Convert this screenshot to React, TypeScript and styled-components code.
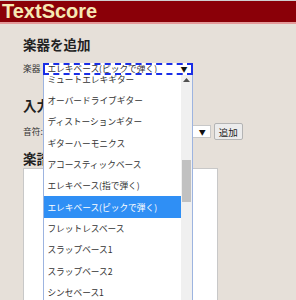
import styled, { createGlobalStyle } from 'styled-components'

const GlobalStyle = createGlobalStyle`
  html, body {
    margin: 0;
    background: #e6e0d9;
    font-family: "Noto Sans CJK JP", "Liberation Sans", sans-serif;
    color: #222;
  }
`

const Header = styled.header`
  height: 21px;
  background: #8a0008;
  border-top: 1px solid #cfcfcf;
  border-bottom: 2px solid #e49a9a;
`

const Title = styled.h1`
  margin: 0;
  padding-left: 2px;
  font-family: "Liberation Sans", Arial, sans-serif;
  font-size: 20px;
  font-weight: bold;
  line-height: 21px;
  color: #f6e8b4;
`

const Main = styled.main`
  padding: 0 23px;
`

const Heading = styled.h2<{ $top: number }>`
  margin: ${p => p.$top}px 0 0;
  font-size: 13.5px;
  line-height: 16px;
  font-weight: bold;
`

const Row = styled.div<{ $top: number }>`
  margin-top: ${p => p.$top}px;
  display: flex;
  align-items: center;
  gap: 3px;
  font-size: 8.7px;
`

const Label = styled.span`
  font-size: 8.7px;
  color: #333;
`

const SelectWrap = styled.div`
  position: relative;
`

const SelectBox = styled.div<{ $focused?: boolean; $width: number }>`
  box-sizing: border-box;
  width: ${p => p.$width}px;
  height: ${p => (p.$focused ? 12 : 13)}px;
  display: flex;
  align-items: center;
  justify-content: space-between;
  padding: 0 4px 0 2px;
  background: #fff;
  border: ${p => (p.$focused ? '2px dashed #1a2ee6' : '1px solid #c8c8c8')};
  font-size: 8.7px;
  color: #333;
  white-space: nowrap;
  overflow: hidden;
`

const Caret = styled.span`
  font-size: 7px;
  color: #111;
`

const ListBox = styled.div`
  position: absolute;
  top: 100%;
  left: 0;
  z-index: 10;
  box-sizing: border-box;
  width: 150px;
  height: 240px;
  display: flex;
  background: #fff;
  border: 1px solid #9db4e0;
  border-top: none;
`

const Options = styled.ul`
  flex: 1;
  margin: 0;
  padding: 0;
  list-style: none;
  overflow: hidden;
`

const Option = styled.li<{ $selected?: boolean; $first?: boolean }>`
  height: 21.33px;
  margin-top: ${p => (p.$first ? -6 : 0)}px;
  display: flex;
  align-items: center;
  padding-left: 3px;
  font-size: 8.7px;
  white-space: nowrap;
  color: ${p => (p.$selected ? '#fff' : '#333')};
  background: ${p => (p.$selected ? '#2f8ff5' : 'transparent')};
`

const ScrollTrack = styled.div`
  width: 11px;
  display: flex;
  flex-direction: column;
  align-items: center;
  background: #f0f0f0;
`

const ScrollArrow = styled.div`
  height: 11px;
  display: flex;
  align-items: center;
  justify-content: center;
`

const ScrollThumb = styled.div`
  margin-top: 74px;
  width: 9px;
  height: 42px;
  background: #c1c1c1;
`

const Button = styled.button`
  height: 17px;
  padding: 0 4px;
  font-family: inherit;
  font-size: 9.5px;
  color: #222;
  background: #ececec;
  border: 1px solid #b4b4b4;
  border-radius: 2px;
`

const Score = styled.textarea`
  display: block;
  margin-top: 2px;
  box-sizing: border-box;
  width: 195px;
  height: 200px;
  background: #fff;
  border: 1px solid #c8c8c8;
  resize: none;
`

const instruments = [
  'ミュートエレキギター',
  'オーバードライブギター',
  'ディストーションギター',
  'ギターハーモニクス',
  'アコースティックベース',
  'エレキベース(指で弾く)',
  'エレキベース(ピックで弾く)',
  'フレットレスベース',
  'スラップベース1',
  'スラップベース2',
  'シンセベース1',
  'シンセベース2',
]

const selected = 'エレキベース(ピックで弾く)'

const App = () => {
  return (
    <>
      <GlobalStyle />
      <Header>
        <Title>TextScore</Title>
      </Header>
      <Main>
        <Heading $top={12}>楽器を追加</Heading>
        <Row $top={10}>
          <Label>楽器</Label>
          <SelectWrap>
            <SelectBox $focused $width={150}>
              {selected}
              <Caret>▼</Caret>
            </SelectBox>
            <ListBox>
              <Options>
                {instruments.map((name, i) => (
                  <Option key={name} $first={i === 0} $selected={name === selected}>
                    {name}
                  </Option>
                ))}
              </Options>
              <ScrollTrack>
                <ScrollArrow>
                  <svg width="7" height="4" viewBox="0 0 7 4">
                    <path d="M0 4 L3.5 0 L7 4 Z" fill="#505050" />
                  </svg>
                </ScrollArrow>
                <ScrollThumb />
              </ScrollTrack>
            </ListBox>
          </SelectWrap>
        </Row>
        <Heading $top={22}>入力補助</Heading>
        <Row $top={10}>
          <Label>音符:</Label>
          <SelectBox $width={165}>
            <span>4分音符</span>
            <Caret>▼</Caret>
          </SelectBox>
          <Button>追加</Button>
        </Row>
        <Heading $top={10}>楽譜</Heading>
        <Score />
      </Main>
    </>
  )
}

export default App
